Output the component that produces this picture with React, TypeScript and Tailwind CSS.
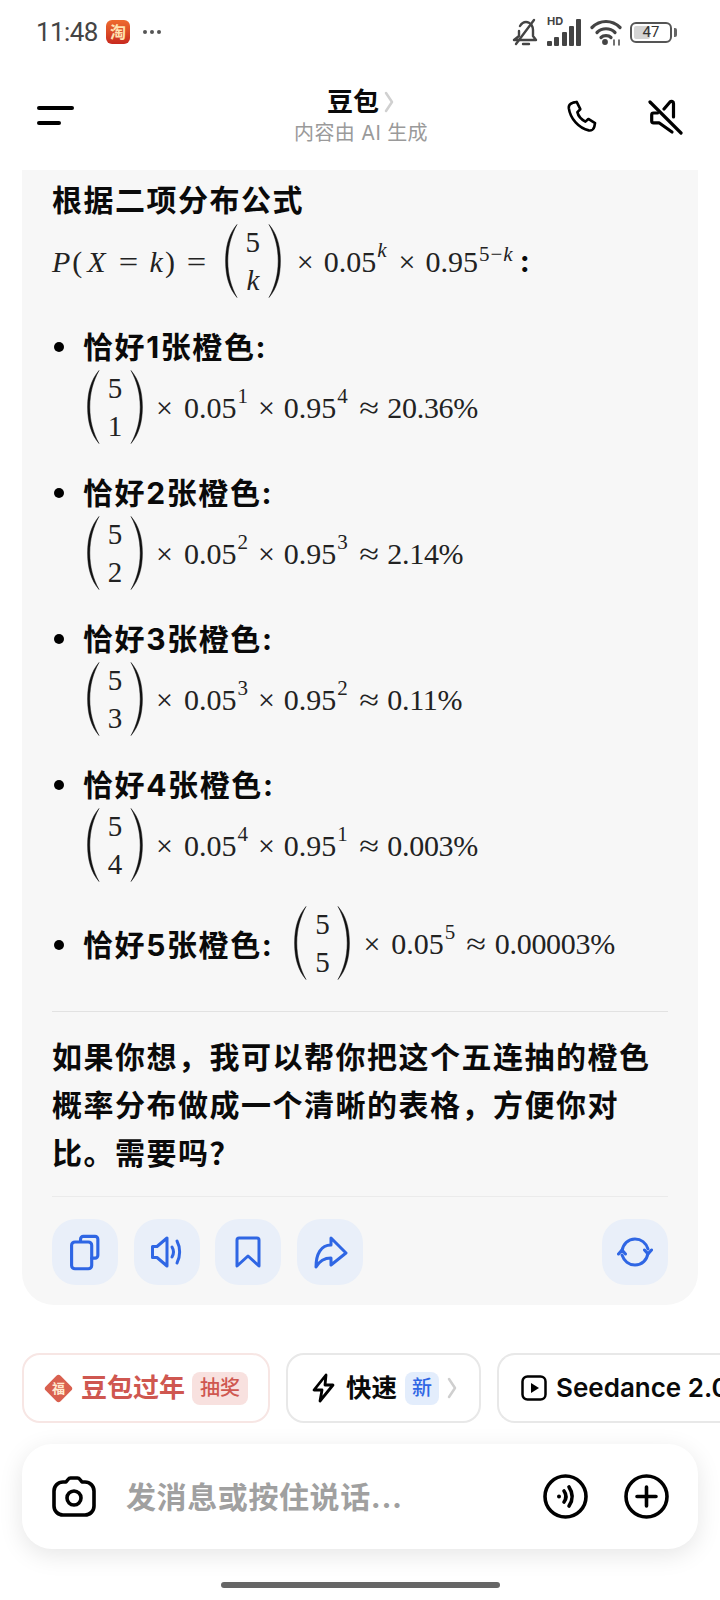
import React from "react";

const Paren = ({ flip = false }: { flip?: boolean }) => (
  <svg width="14" height="76" viewBox="0 0 14 76" className={flip ? "-scale-x-100" : ""} fill="none">
    <path d="M13 1.5C5 11 1.6 23 1.6 38s3.4 27 11.400 36.500C7.200 64 3.800 52 3.800 38S7.200 12 13 1.500Z" fill="#111" stroke="#111" strokeWidth="0.5" />
  </svg>
);

const Binom = ({ b, italic = false }: { b: string; italic?: boolean }) => (
  <span className="inline-flex items-center">
    <Paren />
    <span className="flex flex-col items-center w-[30px] text-[29px] leading-[38px] text-[#222]">
      <span>5</span>
      <span className={italic ? "italic" : ""}>{b}</span>
    </span>
    <Paren flip />
  </span>
);

const Sup = ({ children, italic = false }: { children: React.ReactNode; italic?: boolean }) => (
  <span className={`relative -top-[11px] text-[21px] leading-none ml-[1px] ${italic ? "italic" : ""}`}>{children}</span>
);

const MATH = "font-['Liberation_Serif',serif] text-[30px] text-[#222]";
const CJK = "font-['Inter','Noto_Sans_CJK_SC',sans-serif]";

const Formula = ({ a, b, m, r }: { a: string; b: string; m?: string; r: string }) => (
  <span className={`flex items-center h-[76px] ${MATH}`}>
    <Binom b={b} />
    <span className="ml-[12px] mr-[11px]">×</span>
    <span>0.05</span>
    <Sup>{a}</Sup>
    {m ? (
      <>
        <span className="ml-[10px] mr-[9px]">×</span>
        <span>0.95</span>
        <Sup>{m}</Sup>
      </>
    ) : null}
    <span className="ml-[13px] mr-[10px] scale-x-[1.2]">≈</span>
    <span className="tracking-[-0.3px]">{r}</span>
  </span>
);

const Item = ({ k, a, m, r, last = false }: { k: string; a: string; m: string; r: string; last?: boolean }) => (
  <div className={last ? "mb-[24px]" : "mb-[26px]"}>
    <div className="flex items-center h-[44px]">
      <span className="w-[10px] h-[10px] rounded-full bg-black ml-[2px] mr-[19px]" />
      <span className="text-[30px] font-bold tracking-[1.6px] text-[#0a0a0a]">恰好{k}张橙色:</span>
    </div>
    <div className="pl-[34px]">
      <Formula a={a} b={k} m={m} r={r} />
    </div>
  </div>
);

const ActionBtn = ({ children, className = "" }: { children: React.ReactNode; className?: string }) => (
  <div className={`w-[66px] h-[66px] rounded-[24px] bg-[#e9eff9] flex items-center justify-center ${className}`}>{children}</div>
);

const blue = { stroke: "#2f66e4", strokeWidth: 3, fill: "none", strokeLinecap: "round" as const, strokeLinejoin: "round" as const };

export default function App() {
  return (
    <div className={`w-[720px] h-[1600px] bg-white overflow-hidden flex flex-col ${CJK}`}>
      {/* status bar */}
      <div className="h-[64px] flex items-center pl-[36px] pr-[43px] shrink-0">
        <span className="text-[26px] text-[#444] font-['Roboto',sans-serif] w-[58px] leading-none tracking-[-0.6px]">11:48</span>
        <div className="ml-[12px] w-[24px] h-[24px] rounded-[6px] bg-gradient-to-b from-[#ee6a2e] to-[#c8281f] flex items-center justify-center text-[16px] leading-none text-[#ffe2b0] font-bold overflow-hidden">淘</div>
        <div className="ml-[13px] flex gap-[3px]">
          <span className="w-[4px] h-[4px] rounded-full bg-[#555]" />
          <span className="w-[4px] h-[4px] rounded-full bg-[#555]" />
          <span className="w-[4px] h-[4px] rounded-full bg-[#555]" />
        </div>
        <div className="ml-auto flex items-center">
          <svg width="28" height="28" viewBox="0 0 28 28" fill="none" stroke="#444" strokeWidth="2.400" strokeLinecap="round" strokeLinejoin="round">
            <path d="M2 22h22l-3-4v-6c0-2-.5-3.500-1.500-5M7 13v5l-5 4M8 8c1.500-2.500 3.500-4 6-4 1.500 0 2.500.5 3.500 1" />
            <path d="M22 2 4 26" />
            <path d="M11 26h6" />
          </svg>
          <div className="ml-[7px] relative w-[34px] h-[27px]">
            <span className="absolute left-0 -top-[3px] text-[11px] font-bold text-[#444] leading-none">HD</span>
            <div className="absolute inset-0 flex items-end gap-[2.250px]">
              <span className="w-[5px] h-[5px] bg-[#444] rounded-[1px]" />
              <span className="w-[5px] h-[9px] bg-[#444] rounded-[1px]" />
              <span className="w-[5px] h-[14px] bg-[#444] rounded-[1px]" />
              <span className="w-[5px] h-[20px] bg-[#444] rounded-[1px]" />
              <span className="w-[5px] h-[27px] bg-[#444] rounded-[1px]" />
            </div>
          </div>
          <svg className="ml-[9px]" width="32" height="28" viewBox="0 0 32 28" fill="none" stroke="#444" strokeWidth="3.200" strokeLinecap="round">
            <path d="M2 9.500c8-8 20-8 28 0" />
            <path d="M7 14.500c5-5 13-5 18 0" />
            <path d="M11 19.500c2.500-2.500 7.500-2.500 10 0" />
            <circle cx="15" cy="24" r="1.300" fill="#444" />
            <path d="M24 22v5M29 22v5" strokeWidth="1.500" />
          </svg>
          <div className="ml-[8px] w-[42px] h-[21px] rounded-[6px] border-2 border-[#555] p-[2px] relative">
            <div className="h-full w-[47%] bg-[#d4d4d4] rounded-[2px]" />
            <span className="absolute inset-0 flex items-center justify-center text-[15px] leading-none text-[#333] font-['Roboto',sans-serif]">47</span>
          </div>
          <span className="ml-[2px] w-[3px] h-[9px] rounded-r-[2px] bg-[#666]" />
        </div>
      </div>

      {/* header */}
      <div className="h-[106px] shrink-0 flex items-start pl-[37px] pr-[37px]">
        <div className="w-[120px] mt-[42px] flex flex-col gap-[11px]">
          <span className="block w-[37px] h-[4px] rounded-full bg-black" />
          <span className="block w-[24px] h-[4px] rounded-full bg-black" />
        </div>
        <div className="flex-1 flex flex-col items-center pt-[19px]">
          <div className="flex items-center h-[38px]">
            <span className="text-[26px] font-bold text-[#0a0a0a] leading-none">豆包</span>
            <svg width="12" height="22" viewBox="0 0 12 22" fill="none" stroke="#d0d0d0" strokeWidth="2.500" strokeLinecap="round" strokeLinejoin="round" className="ml-[4px]">
              <path d="M3 2 9 11 3 20" />
            </svg>
          </div>
          <span className="text-[20px] leading-[24px] text-[#9a9a9a] tracking-[0.4px]">内容由 AI 生成</span>
        </div>
        <div className="w-[118px] flex justify-between mt-[35px]">
          <svg width="35" height="35" viewBox="0 0 24 24" fill="none" stroke="#000" strokeWidth="1.800" strokeLinecap="round" strokeLinejoin="round">
            <path d="M5.500 2.500 8 2l2.500 5-2 2c.6 2.800 2.700 5 5.500 6.500l2-1.800 4.600 2.800-.5 2.500c-.4 1.800-2 2.800-3.800 2.500C9.500 20.200 3.600 13.500 2.600 6.300 2.400 4.500 3.700 3 5.500 2.500Z" />
          </svg>
          <svg width="35" height="36" viewBox="0 0 35 36" fill="none" stroke="#000" strokeWidth="3.200" strokeLinecap="round" strokeLinejoin="round">
            <path d="M2 3 33 34" />
            <path d="M16 10 22 3c1.500-1.500 3.500-.5 3.500 1.500V18" />
            <path d="M9.500 14H5.500c-1 0-1.800.8-1.800 1.800V22c0 1 .8 1.800 1.800 1.800H11L24 33" />
          </svg>
        </div>
      </div>

      {/* message card */}
      <div className="mx-[22px] w-[676px] h-[1135px] shrink-0 rounded-b-[32px] bg-[#f7f7f7] pt-[8px] px-[30px] pb-[21px]">
        <div className="h-[44px] mb-[1px] flex items-center text-[30px] font-bold tracking-[1.500px] text-[#0a0a0a]">根据二项分布公式</div>
        <div className="flex items-center h-[76px] mb-[26px]">
          <span className={`flex items-center ${MATH}`}>
            <span className="italic">P</span>
            <span className="ml-[2px]">(</span>
            <span className="italic ml-[5px]">X</span>
            <span className="ml-[14px] scale-x-[1.15]">=</span>
            <span className="italic ml-[13px]">k</span>
            <span className="ml-[2px]">)</span>
            <span className="ml-[13px] scale-x-[1.15]">=</span>
            <span className="ml-[19px] inline-flex">
              <Binom b="k" italic />
            </span>
            <span className="ml-[15px] mr-[10px]">×</span>
            <span>0.05</span>
            <Sup italic>k</Sup>
            <span className="ml-[12px] mr-[10px]">×</span>
            <span>0.95</span>
            <span className="tracking-[1px]">
              <Sup>
                5−<span className="italic">k</span>
              </Sup>
            </span>
          </span>
          <span className="text-[30px] font-bold text-[#0a0a0a] ml-[6px]">:</span>
        </div>

        <Item k="1" a="1" m="4" r="20.36%" />
        <Item k="2" a="2" m="3" r="2.14%" />
        <Item k="3" a="3" m="2" r="0.11%" />
        <Item k="4" a="4" m="1" r="0.003%" last />

        <div className="flex items-center h-[76px]">
          <span className="w-[10px] h-[10px] rounded-full bg-black ml-[2px] mr-[19px]" />
          <span className="text-[30px] font-bold tracking-[1.600px] text-[#0a0a0a]">恰好5张橙色:</span>
          <span className="ml-[20px] -translate-y-[2px]">
            <Formula a="5" b="5" r="0.00003%" />
          </span>
        </div>

        <div className="h-px bg-[#e2e2e2] mt-[28px] mb-[21px]" />

        <p className="text-[30px] leading-[48px] font-bold tracking-[1.500px] text-[#0a0a0a]">
          如果你想，我可以帮你把这个五连抽的橙色
          <br />
          概率分布做成一个清晰的表格，方便你对
          <br />
          比。需要吗？
        </p>

        <div className="h-px bg-[#ebebeb] mt-[19px] mb-[22px]" />

        <div className="flex gap-[15.500px]">
          <ActionBtn>
            <svg width="38" height="38" viewBox="0 0 34 34" {...blue} strokeWidth={2.800}>
              <path d="M13 7V5.500A2.500 2.500 0 0 1 15.500 3H26a2.500 2.500 0 0 1 2.500 2.500V20A2.500 2.500 0 0 1 26 22.500h-3" />
              <rect x="5" y="8" width="18" height="24" rx="3" />
            </svg>
          </ActionBtn>
          <ActionBtn>
            <svg width="36" height="34" viewBox="0 0 36 34" {...blue}>
              <path d="M18 3v28L8 22.500H3.500v-11H8L18 3Z" />
              <path d="M23 12c1.800 3 1.800 7 0 10" />
              <path d="M28 6c3.500 6.500 3.500 15.500 0 22" />
            </svg>
          </ActionBtn>
          <ActionBtn>
            <svg width="30" height="34" viewBox="0 0 30 34" {...blue}>
              <path d="M4 5a2 2 0 0 1 2-2h18a2 2 0 0 1 2 2v26l-11-10-11 10V5Z" />
            </svg>
          </ActionBtn>
          <ActionBtn>
            <svg width="36" height="34" viewBox="0 0 36 34" {...blue}>
              <path d="M19 3l15 15-15 12v-7c-6 0-11 2-15 9C4 19 9 10 19 10V3Z" />
            </svg>
          </ActionBtn>
          <ActionBtn className="ml-auto">
            <svg width="36" height="34" viewBox="0 0 36 34" {...blue}>
              <path d="M5 16C6 9 11 4 18 4c6 0 11 4 13 10" />
              <path d="M31 18c-1 7-6 12-13 12-6 0-11-4-13-10" />
              <path d="M1.500 19 5 15l3.500 4M27.500 15l3.500 4 3.500-4" />
            </svg>
          </ActionBtn>
        </div>
      </div>

      {/* chips */}
      <div className="mt-[48px] h-[70px] shrink-0 flex gap-[16px] pl-[22px] overflow-hidden">
        <div className="w-[248px] shrink-0 h-[70px] rounded-[18px] border-2 border-[#f7e6e4] flex items-center pl-[24px]">
          <div className="w-[21px] h-[21px] rotate-45 rounded-[3px] bg-[#d9604f] flex items-center justify-center">
            <span className="-rotate-45 text-[13px] leading-none font-bold text-[#ffe9cf]">福</span>
          </div>
          <span className="ml-[12px] text-[26px] font-bold leading-none text-[#cf5750]">豆包过年</span>
          <span className="ml-[7px] w-[56px] h-[33px] rounded-[8px] bg-[#f8e1df] flex items-center justify-center text-[20px] leading-none font-medium text-[#cf5750]">抽奖</span>
        </div>
        <div className="w-[195px] shrink-0 h-[70px] rounded-[18px] border-2 border-[#e8e8e8] flex items-center pl-[23px]">
          <svg width="26" height="30" viewBox="0 0 26 30" fill="none" stroke="#000" strokeWidth="2.800" strokeLinejoin="round">
            <path d="M15 2 3 17h8l-2 11 13-16h-8l1-10Z" />
          </svg>
          <span className="ml-[9px] text-[25.500px] font-bold leading-none text-[#0a0a0a]">快速</span>
          <span className="ml-[8px] w-[34px] h-[33px] rounded-[8px] bg-[#e3edfc] flex items-center justify-center text-[20px] leading-none font-medium text-[#2f66e4]">新</span>
          <svg width="12" height="24" viewBox="0 0 12 24" fill="none" stroke="#cfcfcf" strokeWidth="2.500" strokeLinecap="round" strokeLinejoin="round" className="ml-[7px]">
            <path d="M3 3 9 12 3 21" />
          </svg>
        </div>
        <div className="w-[260px] shrink-0 h-[70px] rounded-l-[18px] border-2 border-r-0 border-[#e8e8e8] flex items-center pl-[22px]">
          <svg width="26" height="26" viewBox="0 0 26 26" fill="none">
            <rect x="1.500" y="1.500" width="23" height="23" rx="5" stroke="#000" strokeWidth="2.500" />
            <path d="M10 8v10l8-5-8-5Z" fill="#000" />
          </svg>
          <span className="ml-[9px] text-[26px] font-semibold leading-none text-[#0a0a0a] whitespace-nowrap">Seedance 2.0</span>
        </div>
      </div>

      {/* input */}
      <div className="mt-[21px] mx-[22px] w-[676px] h-[105px] shrink-0 rounded-[30px] bg-white shadow-[0_6px_24px_rgba(0,0,0,0.10)] flex items-center pl-[30px] pr-[29px]">
        <svg width="44" height="42" viewBox="0 0 44 42" fill="none" stroke="#000" strokeWidth="3.600" strokeLinejoin="round">
          <path d="M14 6 16 3.500c.6-.8 1.500-1.500 2.500-1.500h7c1 0 1.900.7 2.500 1.500L30 6h3c5 0 9 4 9 9v15c0 5-4 9-9 9H11c-5 0-9-4-9-9V15c0-5 4-9 9-9h3Z" />
          <circle cx="22" cy="22" r="7" />
        </svg>
        <span className="ml-[30px] text-[30px] font-bold text-[#a0a0a0] tracking-[0.6px] leading-none">发消息或按住说话...</span>
        <div className="ml-auto flex gap-[36px]">
          <svg width="45" height="45" viewBox="0 0 45 45" fill="none" stroke="#000" strokeWidth="3.600" strokeLinecap="round">
            <circle cx="22.500" cy="22.500" r="20.500" />
            <circle cx="16" cy="22.500" r="1" fill="#000" strokeWidth="2" />
            <path d="M21 17c2.500 3.500 2.500 7.500 0 11" />
            <path d="M26 13c4 6 4 13 0 19" />
          </svg>
          <svg width="45" height="45" viewBox="0 0 45 45" fill="none" stroke="#000" strokeWidth="3.600" strokeLinecap="round">
            <circle cx="22.500" cy="22.500" r="20.500" />
            <path d="M22.500 13v19M13 22.500h19" />
          </svg>
        </div>
      </div>

      <div className="mt-[33px] mx-auto w-[279px] h-[6px] rounded-full bg-[#666] shrink-0" />
    </div>
  );
}
